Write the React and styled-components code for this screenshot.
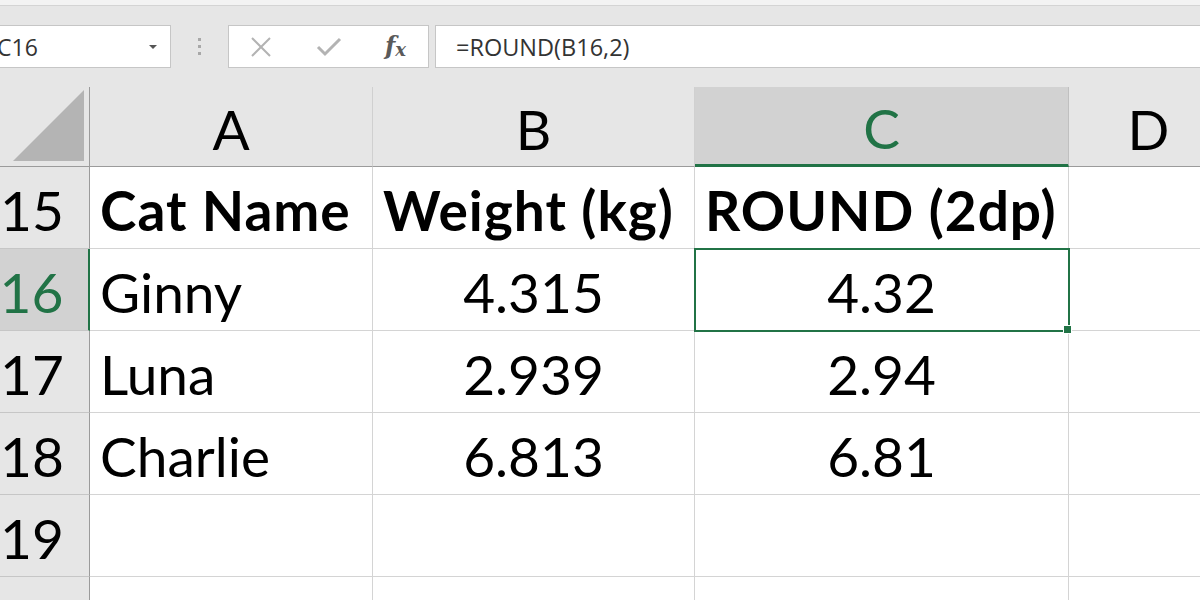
import styled, { createGlobalStyle } from "styled-components";

const GREEN = "#217346";

const GlobalStyle = createGlobalStyle`
	html, body {
		margin: 0;
		padding: 0;
		background: #ffffff;
		overflow: hidden;
	}
	body {
		font-family: "Lato", "Open Sans", sans-serif;
	}
`;

const columns = [
	{ key: "A", width: 283 },
	{ key: "B", width: 322 },
	{ key: "C", width: 374, selected: true },
	{ key: "D", width: 160 },
];

const rows = [
	{ num: "15", cells: ["Cat Name", "Weight (kg)", "ROUND (2dp)", ""], bold: true },
	{ num: "16", cells: ["Ginny", "4.315", "4.32", ""], selected: true },
	{ num: "17", cells: ["Luna", "2.939", "2.94", ""] },
	{ num: "18", cells: ["Charlie", "6.813", "6.81", ""] },
	{ num: "19", cells: ["", "", "", ""] },
	{ num: "", cells: ["", "", "", ""] },
];

const App = () => {
	return (
		<>
			<GlobalStyle />
			<Screen>
				<TitleStrip />
				<Toolbar>
					<NameBox>
						<span>C16</span>
						<Caret />
					</NameBox>
					<Grip>
						<i />
						<i />
						<i />
					</Grip>
					<FormulaButtons>
						<svg width="24" height="20" viewBox="0 0 24 20">
							<path d="M3 1 L21 19 M21 1 L3 19" stroke="#b3b3b3" strokeWidth="2" fill="none" />
						</svg>
						<svg width="26" height="20" viewBox="0 0 26 20">
							<path d="M2 10 L9 17 L24 2" stroke="#b3b3b3" strokeWidth="3" fill="none" />
						</svg>
						<Fx>
							f<sub>x</sub>
						</Fx>
					</FormulaButtons>
					<FormulaBar>=ROUND(B16,2)</FormulaBar>
				</Toolbar>
				<Sheet>
					<Corner>
						<svg width="72" height="72" viewBox="0 0 72 72">
							<polygon points="0,71 71,71 71,0" fill="#b4b4b4" />
						</svg>
					</Corner>
					{columns.map((c) => (
						<ColHeader key={c.key} $width={c.width} $selected={c.selected}>
							{c.key}
						</ColHeader>
					))}
					{rows.map((r, idx) => (
						<Row key={idx}>
							<RowHeader $selected={r.selected}>{r.num}</RowHeader>
							{r.cells.map((text, i) => (
								<Cell
									key={i}
									$width={columns[i].width}
									$bold={r.bold}
									$center={!r.bold && i > 0}
									$active={r.selected && columns[i].selected}
								>
									{text}
									{r.selected && columns[i].selected && <FillHandle />}
								</Cell>
							))}
						</Row>
					))}
				</Sheet>
			</Screen>
		</>
	);
};

export default App;

const Screen = styled.div`
	width: 1225px;
	margin-left: -25px;
	display: flex;
	flex-direction: column;
	background: #ffffff;
`;

const TitleStrip = styled.div`
	flex-shrink: 0;
	height: 5px;
	background: #f3f3f3;
	border-bottom: 1px solid #d4d4d4;
`;

const Toolbar = styled.div`
	flex-shrink: 0;
	height: 81px;
	background: #e6e6e6;
	display: flex;
	align-items: flex-start;
	padding-top: 19px;
	box-sizing: border-box;
	font-family: "Open Sans", "Noto Sans", sans-serif;
`;

const NameBox = styled.div`
	width: 184px;
	height: 43px;
	margin-left: 12px;
	box-sizing: border-box;
	background: #ffffff;
	border: 1px solid #c6c6c6;
	display: flex;
	align-items: center;
	justify-content: space-between;
	padding: 0 13px 0 9px;
	font-size: 23px;
	color: #333;
`;

const Caret = styled.span`
	width: 0;
	height: 0;
	border-left: 4px solid transparent;
	border-right: 4px solid transparent;
	border-top: 4px solid #555;
`;

const Grip = styled.div`
	width: 57px;
	height: 43px;
	display: flex;
	flex-direction: column;
	align-items: center;
	justify-content: center;
	gap: 4px;

	i {
		width: 3px;
		height: 3px;
		background: #a8a8a8;
	}
`;

const FormulaButtons = styled.div`
	width: 201px;
	height: 43px;
	box-sizing: border-box;
	background: #ffffff;
	border: 1px solid #c6c6c6;
	display: flex;
	align-items: center;
	padding: 0 22px 0 20px;
	justify-content: space-between;
`;

const Fx = styled.span`
	font-family: "DejaVu Serif", "Liberation Serif", serif;
	font-style: italic;
	font-weight: bold;
	font-size: 24px;
	color: #5a5a5a;
	line-height: 1;

	sub {
		font-size: 18px;
		vertical-align: -2px;
	}
`;

const FormulaBar = styled.div`
	flex: 1;
	height: 43px;
	margin-left: 6px;
	box-sizing: border-box;
	background: #ffffff;
	border: 1px solid #c6c6c6;
	border-right: none;
	display: flex;
	align-items: center;
	padding-left: 20px;
	font-size: 23.5px;
	color: #333;
`;

const Sheet = styled.div`
	display: flex;
	flex-wrap: wrap;
	align-content: flex-start;
	width: 1400px;
`;

const Corner = styled.div`
	width: 115px;
	height: 80px;
	box-sizing: border-box;
	background: #e6e6e6;
	border-right: 1px solid #9b9b9b;
	border-bottom: 1px solid #9b9b9b;
	display: flex;
	align-items: flex-end;
	justify-content: flex-end;
	padding: 0 4px 4px 0;
`;

const ColHeader = styled.div`
	width: ${(p) => p.$width}px;
	height: 80px;
	box-sizing: border-box;
	background: ${(p) => (p.$selected ? "#d2d2d2" : "#e6e6e6")};
	color: ${(p) => (p.$selected ? GREEN : "#000")};
	border-right: 1px solid ${(p) => (p.$selected ? "#c0c0c0" : "#d0d0d0")};
	border-bottom: ${(p) => (p.$selected ? `3px solid ${GREEN}` : "1px solid #9b9b9b")};
	display: flex;
	align-items: center;
	justify-content: center;
	font-size: 55px;
	padding-top: 4px;
`;

const Row = styled.div`
	display: flex;
	width: 100%;
`;

const RowHeader = styled.div`
	width: 115px;
	height: 82px;
	box-sizing: border-box;
	background: ${(p) => (p.$selected ? "#d2d2d2" : "#e6e6e6")};
	color: ${(p) => (p.$selected ? GREEN : "#000")};
	border-right: ${(p) => (p.$selected ? `2px solid ${GREEN}` : "1px solid #9b9b9b")};
	border-bottom: 1px solid #c6c6c6;
	display: flex;
	align-items: center;
	justify-content: center;
	font-size: 55px;
	padding-top: 4px;
`;

const Cell = styled.div`
	position: relative;
	width: ${(p) => p.$width}px;
	height: 82px;
	box-sizing: border-box;
	border-right: 1px solid #d4d4d4;
	border-bottom: 1px solid #d4d4d4;
	display: flex;
	align-items: center;
	justify-content: ${(p) => (p.$center ? "center" : "flex-start")};
	padding: 4px 10px 0;
	font-size: 55px;
	font-weight: ${(p) => (p.$bold ? 700 : 400)};
	letter-spacing: ${(p) => (p.$bold ? "1px" : "0")};
	color: #000;
	white-space: nowrap;
	${(p) =>
		p.$active &&
		`
		outline: 2px solid ${GREEN};
		outline-offset: -1px;
		z-index: 1;
	`}
`;

const FillHandle = styled.span`
	position: absolute;
	right: -4px;
	bottom: -4px;
	width: 7px;
	height: 7px;
	background: ${GREEN};
	border: 1px solid #ffffff;
`;
